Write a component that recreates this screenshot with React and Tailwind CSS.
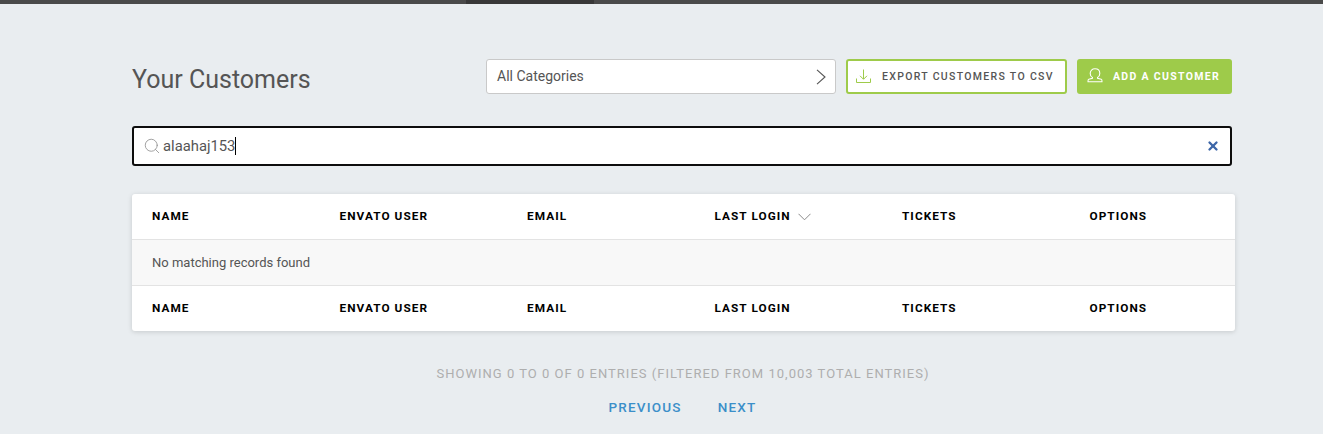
import React from 'react';
import { Search, X } from 'lucide-react';

const columns = ['Name', 'Envato User', 'Email', 'Last Login', 'Tickets', 'Options'];

function HeaderRow({ sorted = false, className = '' }) {
  return (
    <div className={`flex h-[45px] items-center pl-5 ${className}`}>
      {columns.map((name) => (
        <div key={name} className="flex w-[187.5px] shrink-0 items-center text-[11.8px] font-bold uppercase tracking-[0.09em] text-black last:w-auto">
          {name}
          {sorted && name === 'Last Login' ? (
            <svg className="ml-[7px]" width="13" height="8" viewBox="0 0 13 8" fill="none" stroke="#8a8a8a" strokeWidth="1">
              <path d="M0.5 0.8L6.5 6.8L12.5 0.8" />
            </svg>
          ) : null}
        </div>
      ))}
    </div>
  );
}

function DownloadIcon() {
  return (
    <svg width="15" height="15" viewBox="0 0 15 15" fill="none" stroke="#9ecb4a" strokeWidth="1">
      <path d="M7.5 0.5V10M4 6.8L7.5 10.3L11 6.8" />
      <path d="M0.5 9.5V13.5H14.5V9.5" />
    </svg>
  );
}

function UserIcon() {
  return (
    <svg className="-mt-[3px]" width="16" height="15" viewBox="0 0 16 15" fill="none" stroke="#fff" strokeWidth="1.1">
      <path d="M5.4 9.4C3.9 8.5 3.2 7.2 3.2 5.4C3.2 2.6 5.2 0.8 8 0.8C10.8 0.8 12.8 2.6 12.8 5.4C12.8 7.2 12.1 8.5 10.6 9.4V10.4L14.2 11.2C15 11.5 15.1 12.3 15 13.8H1C0.9 12.3 1 11.5 1.8 11.2L5.4 10.4Z" />
    </svg>
  );
}

export default function App() {
  return (
    <div className="h-[434px] w-[1323px] overflow-hidden bg-[#e9edf0] font-['Roboto',sans-serif]">
      <div className="flex h-[4px] bg-[#4a4a4a]">
        <div className="ml-[466px] w-[128px] bg-[#383838]" />
      </div>

      <div className="ml-[132px] w-[1103px]">
        <div className="flex h-[122px] w-[1100px] items-start justify-between pt-[55px]">
          <h1 className="mt-[4px] text-[25px] leading-[34px] font-normal text-[#555555]">Your Customers</h1>
          <div className="flex gap-[10px]">
            <div className="flex h-[35px] w-[350px] items-center justify-between rounded-[3px] border border-[#c9c9c9] bg-white pr-[9px] pl-[10px] text-[14px] text-[#555555]">
              All Categories
              <svg width="10" height="16" viewBox="0 0 10 16" fill="none" stroke="#555555" strokeWidth="1.1">
                <path d="M1 0.8L9 8L1 15.2" />
              </svg>
            </div>
            <button type="button" className="flex h-[35px] w-[221px] items-center rounded-[3px] border-2 border-[#9ecb4a] bg-white pl-[8px] text-[10.5px] font-medium uppercase tracking-[0.125em] text-[#555555]">
              <DownloadIcon />
              <span className="ml-[11px]">Export Customers to CSV</span>
            </button>
            <button type="button" className="flex h-[35px] w-[155px] items-center rounded-[3px] bg-[#9ecb4a] pl-[10px] text-[10.5px] font-bold uppercase tracking-[0.125em] text-white">
              <UserIcon />
              <span className="ml-[10px]">Add a Customer</span>
            </button>
          </div>
        </div>

        <div className="flex h-[40px] w-[1100px] items-center rounded-[3px] border-2 border-[#0d0d0d] bg-white pr-[10px] pl-[9px]">
          <Search className="h-[18px] w-[18px] text-[#8f8f8f]" strokeWidth={1.1} />
          <span className="ml-[2px] text-[14.8px] text-[#555555]">alaahaj153</span>
          <span className="h-[18px] w-px bg-black" />
          <X className="ml-auto h-[14px] w-[14px] text-[#3d66a8]" strokeWidth={4} />
        </div>

        <div className="mt-[28px] overflow-hidden rounded-[3px] bg-white shadow-[0_1px_5px_rgba(0,0,0,0.15)]">
          <HeaderRow sorted />
          <div className="flex h-[47px] items-center border-y border-[#e3e3e3] bg-[#f8f8f8] pt-[1px] pl-5 text-[13px] text-[#555555]">
            No matching records found
          </div>
          <HeaderRow />
        </div>

        <div className="mt-[35px] pr-[1px] text-center text-[13px] uppercase leading-[16px] tracking-[0.078em] text-[#aeaeae]">
          Showing 0 to 0 of 0 entries (filtered from 10,003 total entries)
        </div>
        <div className="mt-[17px] flex justify-center gap-[36px] pr-[2px] text-[13.5px] font-medium uppercase leading-[16px] tracking-[0.09em] text-[#3b8fc9]">
          <span>Previous</span>
          <span>Next</span>
        </div>
      </div>
    </div>
  );
}
